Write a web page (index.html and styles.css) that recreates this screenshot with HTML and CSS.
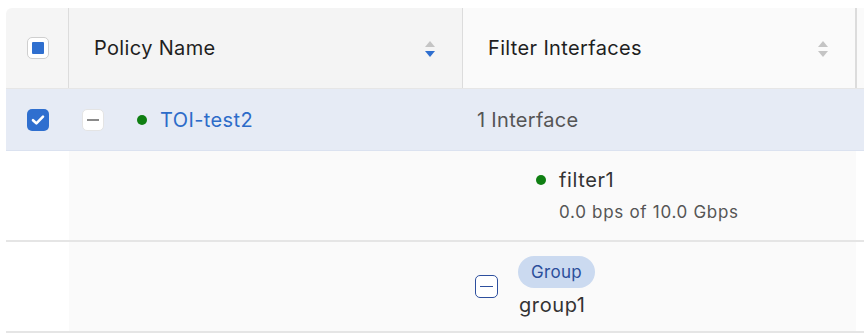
FILE: index.html
```html
<!DOCTYPE html>
<html>
<head>
<meta charset="utf-8">
<link rel="stylesheet" href="styles.css">
</head>
<body>
<div class="table">
  <div class="row head">
    <div class="cell c-check"><span class="cb cb-partial"><span class="cb-fill"></span></span></div>
    <div class="cell c-name sorted"><span class="htext">Policy Name</span>
      <svg class="sort" width="12" height="18" viewBox="0 0 12 18"><path d="M6 1 L11 7 L1 7 Z" fill="#c4c4c4"/><path d="M1 11 L11 11 L6 17 Z" fill="#2f6fcf"/></svg>
    </div>
    <div class="cell c-filter"><span class="htext">Filter Interfaces</span>
      <svg class="sort" width="12" height="18" viewBox="0 0 12 18"><path d="M6 1 L11 7 L1 7 Z" fill="#c4c4c4"/><path d="M1 11 L11 11 L6 17 Z" fill="#c4c4c4"/></svg>
    </div>
    <div class="cell c-rest"></div>
  </div>

  <div class="row selected">
    <div class="cell c-check"><span class="cb cb-checked"><svg width="14" height="12" viewBox="0 0 14 12"><path d="M2 6.2 L5.4 9.4 L12 2.6" fill="none" stroke="#fff" stroke-width="2.6" stroke-linecap="round" stroke-linejoin="round"/></svg></span></div>
    <div class="cell c-name body-name">
      <span class="toggle"><span class="dash"></span></span>
      <span class="dot"></span>
      <a class="link">TOI-test2</a>
    </div>
    <div class="cell c-filter body-filter">1 Interface</div>
    <div class="cell c-rest"></div>
  </div>

  <div class="row expanded">
    <div class="cell c-check blank"></div>
    <div class="cell c-detail">
      <div class="iface">
        <div class="iface-line"><span class="dot"></span><span class="iface-name">filter1</span></div>
        <div class="iface-rate">0.0 bps of 10.0 Gbps</div>
      </div>
    </div>
  </div>

  <div class="row expanded">
    <div class="cell c-check blank"></div>
    <div class="cell c-detail">
      <div class="group">
        <span class="gtoggle"><span class="gdash"></span></span>
        <div class="gtext">
          <span class="badge">Group</span>
          <span class="gname">group1</span>
        </div>
      </div>
    </div>
  </div>
</div>
</body>
</html>
```

FILE: styles.css
```css
html, body {
  margin: 0;
  padding: 0;
  background: #ffffff;
  overflow: hidden;
}
body {
  font-family: Inter, "Liberation Sans", Arial, sans-serif;
  color: #222;
}
.table {
  margin: 8px 0 0 6px;
  width: 900px;
}
.row {
  display: grid;
  grid-template-columns: 63px 394px 394px 1fr;
}
.cell {
  display: flex;
  align-items: center;
}
.head {
  height: 81px;
  border-bottom: 1px solid #e6e6e6;
  box-sizing: border-box;
}
.head .c-check {
  background: #f5f5f5;
  border-top-left-radius: 6px;
  border-right: 1px solid #dcdcdc;
  justify-content: center;
  padding-left: 1px;
}
.head .c-name {
  background: #f4f4f4;
  border-right: 1px solid #dcdcdc;
  padding: 0 26px 0 25px;
  justify-content: space-between;
}
.head .c-filter {
  background: #fafafa;
  border-right: 2px solid #dcdcdc;
  padding: 0 26px 0 25px;
  justify-content: space-between;
}
.head .c-rest {
  background: #fafafa;
}
.htext {
  font-size: 20px;
  color: #1f1f1f;
  letter-spacing: 0.35px;
  line-height: 24px;
}
.sort {
  display: block;
  margin-top: 2px;
}
.cb {
  width: 22px;
  height: 22px;
  box-sizing: border-box;
  border-radius: 5px;
  display: flex;
  align-items: center;
  justify-content: center;
}
.cb-partial {
  border: 1px solid #cfcfcf;
  background: #fff;
}
.cb-fill {
  width: 12px;
  height: 12px;
  background: #2f6fcf;
  border-radius: 1px;
}
.cb-checked {
  background: #2f6fcf;
}
.selected {
  height: 62px;
  background: #e6ebf5;
  border-bottom: 1px solid #dbe2f0;
  box-sizing: border-box;
}
.selected .c-check {
  justify-content: center;
  padding-left: 1px;
}
.body-name {
  padding-left: 13px;
}
.toggle {
  width: 22px;
  height: 22px;
  box-sizing: border-box;
  border-radius: 5px;
  background: #fff;
  border: 1px solid #e4e4e4;
  display: flex;
  align-items: center;
  justify-content: center;
}
.dash {
  width: 12px;
  height: 2px;
  background: #8a8a8a;
}
.dot {
  width: 10px;
  height: 10px;
  border-radius: 50%;
  background: #0f7f12;
  flex: none;
}
.body-name .dot {
  margin-left: 33px;
}
.link {
  color: #2d6cc9;
  font-size: 20px;
  margin-left: 13px;
  letter-spacing: 0.4px;
  line-height: 24px;
}
.body-filter {
  padding-left: 14px;
  font-size: 20px;
  color: #555;
  letter-spacing: 0.3px;
}
.expanded {
  grid-template-columns: 63px 787px 1fr;
  height: 91px;
  border-bottom: 2px solid #e5e5e5;
  box-sizing: border-box;
}
.expanded .blank {
  background: #fff;
}
.c-detail {
  background: #fafafa;
  padding-left: 406px;
}
.iface {
  display: flex;
  flex-direction: column;
  gap: 10px;
  padding-left: 61px;
}
.iface-line {
  display: flex;
  align-items: center;
  gap: 13px;
}
.iface-name {
  font-size: 20px;
  line-height: 24px;
  color: #333;
  letter-spacing: 0.6px;
}
.iface-rate {
  font-size: 17px;
  line-height: 21px;
  color: #555;
  padding-left: 23px;
  letter-spacing: 0.7px;
}
.group {
  display: flex;
  align-items: center;
  gap: 21px;
}
.gtoggle {
  width: 23px;
  height: 23px;
  box-sizing: border-box;
  border-radius: 5px;
  border: 1.5px solid #2d4f9e;
  background: #fff;
  display: flex;
  align-items: center;
  justify-content: center;
}
.gdash {
  width: 13px;
  height: 1.5px;
  background: #2d4f9e;
}
.gtext {
  display: flex;
  flex-direction: column;
  align-items: flex-start;
  gap: 5px;
}
.badge {
  background: #cbdaf0;
  color: #2b4f9b;
  font-size: 17px;
  height: 32px;
  line-height: 32px;
  padding: 0 13px;
  border-radius: 16px;
  margin-left: -1px;
  letter-spacing: 0.3px;
}
.gname {
  font-size: 20px;
  line-height: 24px;
  color: #333;
  letter-spacing: 0.6px;
}
```
